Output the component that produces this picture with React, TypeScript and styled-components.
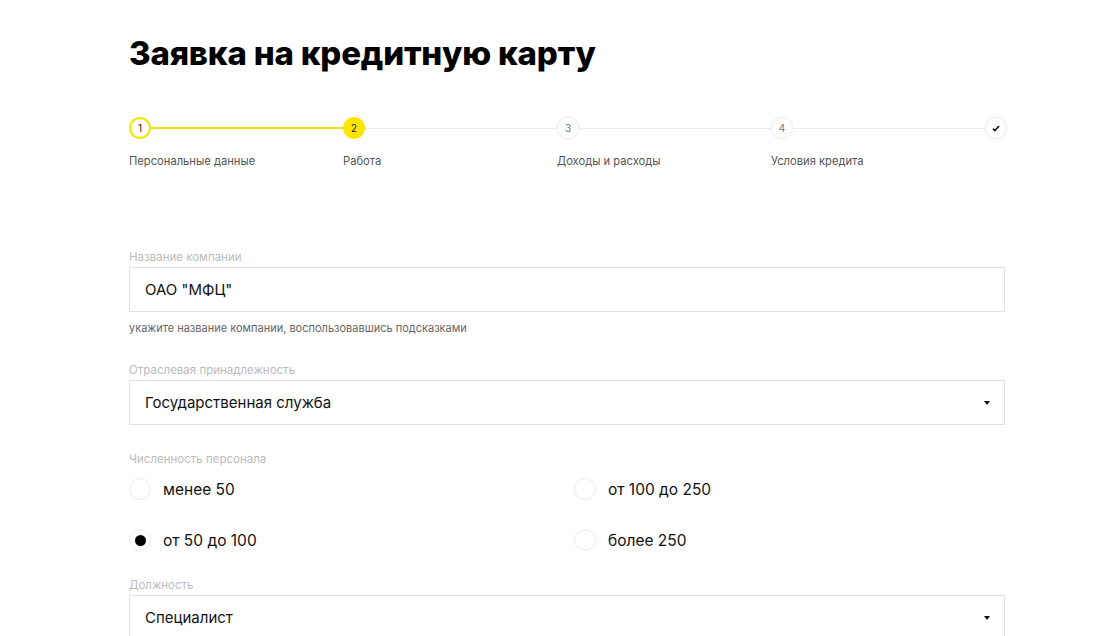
import React from "react";
import styled, { createGlobalStyle } from "styled-components";

const Global = createGlobalStyle`
  html, body { margin: 0; padding: 0; background: #fff; }
  body { font-family: Inter, "Noto Sans", sans-serif; color: #111; }
`;

const Page = styled.div`
  width: 876px;
  margin-left: 129px;
  padding-top: 32px;
`;

const Title = styled.h1`
  margin: 0;
  font-size: 33px;
  font-weight: 800;
  letter-spacing: -0.2px;
  line-height: 42px;
  color: #000;
`;

const Stepper = styled.div`
  margin-top: 43px;
  display: grid;
  grid-template-columns: repeat(4, 214px) 22px;
`;

const Step = styled.div`
  position: relative;
  height: 80px;
`;

const Line = styled.div<{ $active?: boolean }>`
  position: absolute;
  left: 22px;
  width: 192px;
  top: 11px;
  height: ${p => (p.$active ? 2 : 1)}px;
  margin-top: ${p => (p.$active ? -1 : 0)}px;
  background: ${p => (p.$active ? "#f5e000" : "#ececec")};
`;

const Dot = styled.div<{ $state: "done" | "current" | "todo" }>`
  width: 22px;
  height: 22px;
  box-sizing: border-box;
  border-radius: 50%;
  display: flex;
  align-items: center;
  justify-content: center;
  font-size: 10px;
  color: ${p => (p.$state === "todo" ? "#777" : "#222")};
  background: ${p => (p.$state === "current" ? "#ffe500" : "#fff")};
  border: ${p =>
    p.$state === "done" ? "2px solid #f5e400" : p.$state === "current" ? "none" : "1px solid #f0f0f0"};
  box-shadow: ${p => (p.$state === "todo" ? "0 0 3px rgba(0,0,0,0.06)" : "none")};
`;

const StepLabel = styled.div`
  margin-top: 15px;
  font-size: 11.2px;
  line-height: 14px;
  color: #555;
  white-space: nowrap;
`;

const Form = styled.div`
  margin-top: 53px;
  display: flex;
  flex-direction: column;
`;

const Field = styled.div`
  display: flex;
  flex-direction: column;
  margin-bottom: 27px;
`;

const Label = styled.div`
  font-size: 11.5px;
  color: #bbb;
  line-height: 14px;
  margin-bottom: 3px;
`;

const Box = styled.div`
  height: 45px;
  box-sizing: border-box;
  border: 1px solid #e2e2e2;
  display: flex;
  align-items: center;
  justify-content: space-between;
  padding: 0 14px 0 15px;
  font-size: 15px;
  color: #111;
`;

const Hint = styled.div`
  margin-top: 9px;
  font-size: 11px;
  color: #666;
  line-height: 14px;
  margin-bottom: 1px;
`;

const Arrow = styled.span`
  width: 0;
  height: 0;
  border-left: 3px solid transparent;
  border-right: 3px solid transparent;
  border-top: 4px solid #111;
`;

const Radios = styled.div`
  display: grid;
  grid-template-columns: 445px 1fr;
  row-gap: 29px;
  margin-top: 9px;
`;

const Radio = styled.label`
  display: flex;
  align-items: center;
  gap: 12px;
  font-size: 15.5px;
  color: #111;
  height: 22px;
`;

const RadioCircle = styled.span<{ $checked?: boolean }>`
  width: 22px;
  height: 22px;
  box-sizing: border-box;
  border-radius: 50%;
  border: 1px solid #ececec;
  display: flex;
  align-items: center;
  justify-content: center;
  &::after {
    content: "";
    width: 11px;
    height: 11px;
    border-radius: 50%;
    background: #000;
    display: ${p => (p.$checked ? "block" : "none")};
  }
`;

const steps = [
  { n: "1", label: "Персональные данные", state: "done" as const },
  { n: "2", label: "Работа", state: "current" as const },
  { n: "3", label: "Доходы и расходы", state: "todo" as const },
  { n: "4", label: "Условия кредита", state: "todo" as const },
];

export default function App() {
  return (
    <>
      <Global />
      <Page>
        <Title>Заявка на кредитную карту</Title>
        <Stepper>
          {steps.map((s, i) => (
            <Step key={s.n}>
              <Line $active={i === 0} />
              <Dot $state={s.state}>{s.n}</Dot>
              <StepLabel>{s.label}</StepLabel>
            </Step>
          ))}
          <Step>
            <Dot $state="todo">
              <svg width="8" height="7" viewBox="0 0 8 7">
                <path d="M1 3.6 L3 5.6 L7 1" stroke="#111" strokeWidth="1.6" fill="none" />
              </svg>
            </Dot>
          </Step>
        </Stepper>
        <Form>
          <Field>
            <Label>Название компании</Label>
            <Box>ОАО "МФЦ"</Box>
            <Hint>укажите название компании, воспользовавшись подсказками</Hint>
          </Field>
          <Field>
            <Label>Отраслевая принадлежность</Label>
            <Box>
              Государственная служба
              <Arrow />
            </Box>
          </Field>
          <Field>
            <Label>Численность персонала</Label>
            <Radios>
              <Radio><RadioCircle />менее 50</Radio>
              <Radio><RadioCircle />от 100 до 250</Radio>
              <Radio><RadioCircle $checked />от 50 до 100</Radio>
              <Radio><RadioCircle />более 250</Radio>
            </Radios>
          </Field>
          <Field>
            <Label>Должность</Label>
            <Box>
              Специалист
              <Arrow />
            </Box>
          </Field>
        </Form>
      </Page>
    </>
  );
}
